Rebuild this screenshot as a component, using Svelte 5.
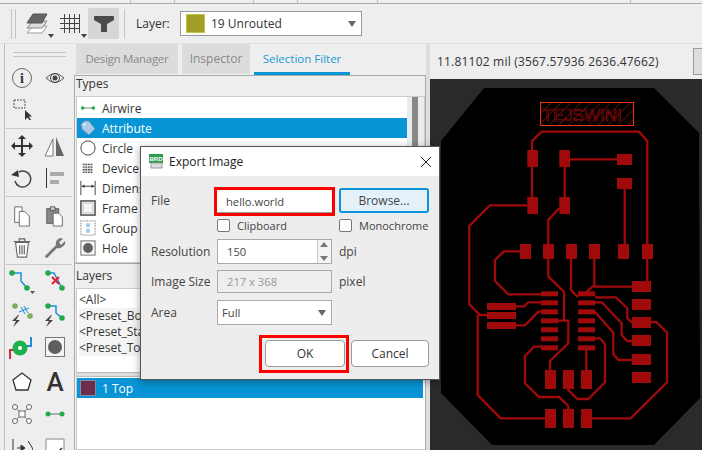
<script>
  const types = [
    { name: "Airwire", icon: "airwire" },
    { name: "Attribute", icon: "tag", selected: true },
    { name: "Circle", icon: "circle" },
    { name: "Device", icon: "device" },
    { name: "Dimension", icon: "dim" },
    { name: "Frame", icon: "frame" },
    { name: "Group", icon: "group" },
    { name: "Hole", icon: "hole" }
  ];
  const presets = ["<All>", "<Preset_Bottom>", "<Preset_Standard>", "<Preset_Top>"];
  const ticks = [130, 174, 253, 297, 377, 630];

  // pcb pads as x, y, w, h in page coordinates
  const pads = [
    [527.3, 150, 10.7, 17], [559.3, 150, 10.7, 17], [527.3, 197, 10.7, 17], [559.3, 197, 10.7, 17],
    [617, 154, 15, 11], [617, 178, 15, 11],
    [520, 244, 11, 15], [543, 244, 11, 15], [566, 244, 11, 15], [589, 244, 11, 15], [618, 244, 11, 15], [642, 244, 11, 15],
    [487, 303, 29, 7], [487, 312, 29, 7], [487, 322, 29, 7],
    [632, 281, 19, 11], [632, 299, 19, 11], [632, 317, 19, 11], [632, 335, 19, 11], [632, 354, 19, 11], [632, 372, 19, 11],
    [545, 370, 11, 19], [563, 370, 11, 19], [581, 370, 11, 19],
    [545, 409, 11, 19], [563, 409, 11, 19], [581, 409, 11, 19]
  ];
  const icPads = [291.3, 300.3, 309.3, 318.3, 327.3, 336.3, 345.3];
  const traces = [
    "532,150 532,141 541.7,131.7 639,131.7 647.3,141 647.3,282",
    "532,167 532,197",
    "564.7,167 564.7,197",
    "570,159.3 617,159.3",
    "624.7,189 624.7,244",
    "527,205.3 490,205.3 469.3,226 469.3,304.3 480,315 487,315",
    "559.3,208 548.3,220 548.3,276.7 564,291.7 564,320",
    "520,251.3 504,251.3 495,260 495,281 508.3,294.3 541,294.3",
    "571,259 571,290 578,297.3",
    "594.3,259 594.3,285 586.7,291.7",
    "593.3,286.7 632,286.7",
    "516,306.3 524.3,306.3 528.3,302.3 541,302.3",
    "516,325.3 525,325.3 538.3,311.7 541,311.7",
    "477.7,315 477.7,395 500.7,418.3 545,418.3",
    "558,320.7 568.3,320.7 568.3,343.3 550,361 550,370",
    "541,346.7 534,346.7 525,356 525,383.3 539,397 559,397 568.3,406 568.3,409",
    "586.3,350 586.3,370",
    "595,338.3 600,338.3 605,344.3 605,382.3 588.3,399 577.3,399 567.3,389",
    "592,418.3 630.7,418.3 667,382.3 667,332.7 656.3,322 651,322",
    "595,297.3 616,297.3 627.3,308.3 627.3,318.3 632,322.3",
    "595,302.3 601.7,302.3 621.7,323.3 621.7,335 627.3,341 632,341",
    "595,311.7 613.3,332.7 613.3,354.3 618.7,360 632,360"
  ];
</script>

<div class="app">
  <div class="topstrip">
    {#each ticks as t}<i style="left:{t}px"></i>{/each}
  </div>

  <div class="toolbar">
    <div class="grip"></div>
    <svg class="tb" width="28" height="26" viewBox="0 0 28 26">
      <path d="M0 22 6 15H20L15 22Z" fill="#fff" stroke="#999"/>
      <path d="M0 17 6 10H20L15 17Z" fill="#ddd" stroke="#888"/>
      <path d="M0 12 6 3H20L15 12Z" fill="#666" stroke="#555"/>
      <path d="M21 23h6l-3 4z" fill="#444"/>
    </svg>
    <svg class="tb gridicon" width="28" height="26" viewBox="0 0 28 26">
      <path d="M4.500 3V22M9.500 3V22M14.500 3V22M19.500 3V22M0 7.500H20M0 12.500H20M0 17.500H20" stroke="#444" fill="none"/>
      <path d="M21 23h6l-3 4z" fill="#444"/>
    </svg>
    <div class="filter">
      <svg width="20" height="16" viewBox="0 0 20 16"><path d="M0 1Q0 0 1 0H19Q20 0 20 1V4L13 8V15Q13 16 12 16H8Q7 16 7 15V8L0 4Z" fill="#4a4a4a"/></svg>
    </div>
    <div class="vsep"></div>
    <span class="layerlabel">Layer:</span>
    <div class="layerselect">
      <span class="swatch"></span>
      <span>19 Unrouted</span>
      <span class="arrow"></span>
    </div>
  </div>

  <div class="main">
    <div class="tools">
      <div class="toolgrip"></div>
      <div class="toolgrid">
        <svg viewBox="0 0 22 22"><circle cx="11" cy="11" r="9.500" fill="none" stroke="#666"/><text x="11" y="16" text-anchor="middle" font-family="Liberation Serif" font-weight="700" font-size="14" fill="#333">i</text></svg>
        <svg viewBox="0 0 22 22"><path d="M2 11Q11 2 20 11Q11 20 2 11Z" fill="none" stroke="#555"/><circle cx="11" cy="11" r="4.500" fill="none" stroke="#444"/><circle cx="11" cy="11" r="2.500" fill="#444"/></svg>
        <svg viewBox="0 0 22 22"><rect x="3" y="2" width="11" height="8" fill="none" stroke="#555" stroke-dasharray="2 1"/><path d="M14 12V22L16.500 19.500L19 23L20 22L18 18.500H21Z" fill="#333"/></svg>
        <span></span>
        <div class="tsep"></div>
        <svg viewBox="0 0 22 22"><path d="M11 1V21M1 11H21" stroke="#333" stroke-width="2"/><path d="M11 0 7 4H15ZM11 22 7 18H15ZM0 11 4 7V15ZM22 11 18 7V15Z" fill="#333"/></svg>
        <svg viewBox="0 0 22 22"><path d="M9 4V21H1Z" fill="#fff" stroke="#777"/><path d="M12 2V21H20Z" fill="#666"/></svg>
        <svg viewBox="0 0 22 22"><path d="M8 5A8 8 0 1 1 4 14" fill="none" stroke="#444" stroke-width="1.500"/><path d="M0 8 7 3 8 10Z" fill="#333"/></svg>
        <svg viewBox="0 0 22 22"><path d="M2.500 1V21" stroke="#333"/><path d="M6 5H20V9H6ZM6 13H15V17H6Z" fill="#aaa"/></svg>
        <div class="tsep"></div>
        <svg viewBox="0 0 22 24"><path d="M3 2H11V19H3Z" fill="#fff" stroke="#666"/><path d="M8 7H14L19 12V23H8Z" fill="#fff" stroke="#666"/></svg>
        <svg viewBox="0 0 22 24"><path d="M2 4H15V20H2Z" fill="#888" stroke="#555"/><path d="M6 2H11V6H6Z" fill="#ccc" stroke="#555"/><path d="M9 9H15L19 13V23H9Z" fill="#fff" stroke="#666"/></svg>
        <svg viewBox="0 0 22 24"><path d="M4 6 6 22H16L18 6Z" fill="#fff" stroke="#666" stroke-width="1.200"/><path d="M2 5H20M8 5V2H14V5M8.500 9V19M11 9V19M13.500 9V19" stroke="#666" fill="none" stroke-width="1.300"/></svg>
        <svg viewBox="0 0 22 22"><path d="M2 21 1 19 12 8Q11 3 16 1Q18 1 19 2L15 5 17 8 21 4Q22 8 18 10Q16 12 13 11L3 21Z" fill="#777"/></svg>
        <div class="tsep"></div>
        <svg class="wide" viewBox="0 0 26 26"><path d="M3 6H12V14L18 21" fill="none" stroke="#1a8fe0" stroke-width="1.500"/><circle cx="3" cy="6" r="2.800" fill="#22a94b"/><circle cx="18" cy="21" r="2.800" fill="#22a94b"/><path d="M21 24h5l-2.500 3z" fill="#555"/></svg>
        <svg class="wide" viewBox="0 0 26 26"><path d="M6 6H12L20 21" fill="none" stroke="#1a8fe0" stroke-width="1.500"/><circle cx="6" cy="6" r="2.800" fill="#22a94b"/><circle cx="20" cy="21" r="2.800" fill="#22a94b"/><path d="M10 10 17 17M17 10 10 17" stroke="#e2202c" stroke-width="2"/></svg>
        <svg class="wide" viewBox="0 0 26 26"><circle cx="6" cy="4" r="2.800" fill="#7dad5a"/><circle cx="21" cy="14" r="2.800" fill="#7dad5a"/><path d="M12 5 16 12M15 4 19 11M10 10 20 6" stroke="#1a8fe0"/><path d="M9 13 3 19H7L4 25 11 18H7L10 13Z" fill="#444"/></svg>
        <svg class="wide" viewBox="0 0 26 26"><path d="M6 4H14V11L20 16" fill="none" stroke="#1a8fe0" stroke-width="1.500"/><circle cx="6" cy="4" r="2.800" fill="#22a94b"/><circle cx="20" cy="16" r="2.800" fill="#22a94b"/><path d="M9 13 3 19H7L4 25 11 18H7L10 13Z" fill="#444"/></svg>
        <svg class="wide" viewBox="0 0 26 26"><path d="M1 25V16H5" fill="none" stroke="#c8303c" stroke-width="2"/><path d="M22 3V12H18" fill="none" stroke="#1a8fe0" stroke-width="2"/><circle cx="11" cy="14" r="7.500" fill="#1db14c"/><circle cx="11" cy="14" r="2" fill="#fff"/></svg>
        <svg viewBox="0 0 22 22"><rect x="1.500" y="1.500" width="19" height="19" fill="#f4f4f4" stroke="#777"/><circle cx="11" cy="11" r="7" fill="#5f5f5f"/></svg>
        <svg viewBox="0 0 22 22"><path d="M11 2 20 9 17 19H5L2 9Z" fill="#fff" stroke="#333" stroke-width="1.300"/></svg>
        <span class="bigA">A</span>
        <svg viewBox="0 0 22 22"><path d="M4 4 18 18M18 4 4 18" stroke="#888"/><rect x="8" y="8" width="6" height="6" fill="#fff" stroke="#666"/><g fill="#fff" stroke="#666"><circle cx="4" cy="4" r="2.500"/><circle cx="18" cy="4" r="2.500"/><circle cx="4" cy="18" r="2.500"/><circle cx="18" cy="18" r="2.500"/></g></svg>
        <svg viewBox="0 0 22 22"><path d="M4 11H18" stroke="#999" stroke-width="1.500"/><circle cx="4" cy="11" r="2.500" fill="#22a94b"/><circle cx="18" cy="11" r="2.500" fill="#22a94b"/></svg>
        <svg viewBox="0 0 22 22"><path d="M2 2V22M17 4 22 12 17 20" fill="none" stroke="#333"/><path d="M6 11H12M10 8 14 11 10 14Z" fill="#333" stroke="#333"/></svg>
        <svg viewBox="0 0 22 22"><path d="M2 2H20V22H2Z" fill="#fff" stroke="#888"/><path d="M9 20 18 11" stroke="#333" stroke-width="1.500"/></svg>
      </div>
    </div>

    <div class="panel">
      <div class="tabs">
        <div class="tab dm">Design Manager</div>
        <div class="tab insp">Inspector</div>
        <div class="tab active">Selection Filter</div>
      </div>
      <div class="group types">
        <div class="grouphead">Types</div>
        <div class="listbox">
          <div class="rows">
            {#each types as t}
              <div class="row" class:selected={t.selected}>
                <svg class="rowicon" viewBox="0 0 18 18">
                  {#if t.icon === "airwire"}
                    <path d="M3 9H15" stroke="#888" stroke-width="1.200"/><circle cx="3" cy="9" r="2" fill="#22a94b"/><circle cx="15" cy="9" r="2" fill="#22a94b"/>
                  {:else if t.icon === "tag"}
                    <path d="M1 5 5 1H10L17 10 10 17 2 10Z" fill="#a9cbe8" stroke="#5f88aa"/><circle cx="5" cy="5" r="1.200" fill="#fff"/>
                  {:else if t.icon === "circle"}
                    <circle cx="9" cy="9" r="8" fill="#fff" stroke="#333"/>
                  {:else if t.icon === "device"}
                    <path d="M4 4H14V14H4Z" fill="#ddd"/><path d="M3 5H15M3 8H15M3 11H15M3 14H15" stroke="#555" stroke-dasharray="2 1" stroke-width="1.500"/>
                  {:else if t.icon === "dim"}
                    <path d="M1 1V17M17 1V17M2 7H16" stroke="#333" fill="none"/><path d="M2 7 5 5V9ZM16 7 13 5V9Z" fill="#333"/>
                  {:else if t.icon === "frame"}
                    <rect x="1" y="1" width="16" height="16" fill="#ddd" stroke="#444" stroke-width="1.500"/><rect x="4.500" y="4.500" width="9" height="9" fill="#f2f2f2"/>
                  {:else if t.icon === "group"}
                    <rect x="1" y="1" width="16" height="16" fill="#fff" stroke="#aaa" stroke-dasharray="2 1" stroke-width="1.500"/><circle cx="9" cy="6" r="2.500" fill="#9fd0ee"/><circle cx="9" cy="12" r="2.500" fill="#9fd0ee"/>
                  {:else}
                    <rect x="1" y="1" width="16" height="16" fill="#f6f6f6" stroke="#666"/><circle cx="9" cy="9" r="5.500" fill="#5f5f5f"/>
                  {/if}
                </svg>
                <span>{t.name}</span>
              </div>
            {/each}
          </div>
          <div class="scroll"><b></b></div>
        </div>
      </div>
      <div class="group layers">
        <div class="grouphead tall">Layers</div>
        <div class="listbox layerbox">
          <div class="presets">
            {#each presets as p, i}
              <div class="preset" class:first={i === 0}>{p}</div>
            {/each}
          </div>
          <div class="splitter"></div>
          <div class="layerrow"><span class="topswatch"></span><span>1 Top</span></div>
        </div>
      </div>
    </div>

    <div class="canvaswrap">
      <div class="coords">
        <span>11.81102 mil (3567.57936 2636.47662)</span>
        <span class="coordbtn"></span>
      </div>
      <div class="canvas">
        <svg width="272" height="371" viewBox="430 79 272 371">
          <defs>
            <pattern id="hatch" width="7" height="7" patternUnits="userSpaceOnUse" patternTransform="rotate(45)">
              <path d="M0 0V7" stroke="#d42a10" stroke-width="0.700"/>
            </pattern>
          </defs>
          <path d="M484 88H654L699 133L700 398L654 445H492L441 393V141Z" fill="#000"/>
          <rect x="540.500" y="102.500" width="93" height="23" fill="url(#hatch)" stroke="#f03010"/>
          <text x="582" y="120.500" text-anchor="middle" class="boardtext">TEJSWINI</text>
          <g fill="none" stroke="#a00a0a" stroke-width="2.300">
            {#each traces as t}<polyline points={t}/>{/each}
          </g>
          <g fill="#a00a0a">
            {#each pads as p}<rect x={p[0]} y={p[1]} width={p[2]} height={p[3]}/>{/each}
            {#each icPads as y}
              <rect x="541" {y} width="17" height="5"/>
              <rect x="578" {y} width="17" height="5"/>
            {/each}
          </g>
        </svg>
      </div>
    </div>
  </div>

  <div class="dialog">
    <div class="titlebar">
      <svg width="15" height="15" viewBox="0 0 15 15"><rect width="14" height="9" fill="#2d9a4e"/><text x="7" y="7" text-anchor="middle" font-size="6" font-family="Liberation Sans" font-weight="700" fill="#fff">BRD</text><path d="M2 9H13V14H2Z" fill="#ddd" stroke="#999"/></svg>
      <span class="dtitle">Export Image</span>
      <svg class="close" width="10" height="10" viewBox="0 0 10 10"><path d="M0 0 10 10M10 0 0 10" stroke="#222"/></svg>
    </div>
    <div class="dbody">
      <label for="f">File</label>
      <div class="fileinput"><input id="f" value="hello.world" /></div>
      <button class="browse">Browse...</button>
      <span></span>
      <div class="check"><span class="box"></span>Clipboard</div>
      <div class="check"><span class="box"></span>Monochrome</div>
      <label for="r">Resolution</label>
      <div class="spin"><span id="r">150</span><div class="spinbtns"><i class="up"></i><i class="down"></i></div></div>
      <span class="unit">dpi</span>
      <label for="s">Image Size</label>
      <div class="field disabled"><span id="s">217 x 368</span></div>
      <span class="unit">pixel</span>
      <label for="a">Area</label>
      <div class="field combo"><span id="a">Full</span><span class="arrow"></span></div>
      <span></span>
    </div>
    <div class="dbuttons">
      <div class="okwrap"><button>OK</button></div>
      <button class="cancel">Cancel</button>
    </div>
  </div>
</div>

<style>
  :global(body) {
    margin: 0;
  }
  .app {
    position: relative;
    width: 702px;
    height: 450px;
    overflow: hidden;
    background: #eeeeee;
    font-family: "Open Sans", "Liberation Sans", sans-serif;
    font-size: 12px;
    color: #333;
    display: flex;
    flex-direction: column;
  }
  .topstrip {
    position: relative;
    height: 3px;
    border-bottom: 1px solid #aaa;
    flex: none;
  }
  .topstrip i {
    position: absolute;
    top: 0;
    width: 1px;
    height: 3px;
    background: #bbb;
  }
  .toolbar {
    height: 40px;
    flex: none;
    display: flex;
    align-items: center;
    border-bottom: 1px solid #ddd;
    box-sizing: border-box;
  }
  .grip {
    width: 3px;
    height: 30px;
    margin-left: 11px;
    border-left: 1px solid #c4c4c4;
    border-right: 1px solid #c4c4c4;
  }
  .tb {
    margin-left: 11px;
    flex: none;
    overflow: visible;
  }
  .gridicon {
    margin-left: 5px;
  }
  .filter {
    width: 31px;
    height: 31px;
    flex: none;
    background: #d6d6d6;
    border-radius: 2px;
    display: flex;
    align-items: center;
    justify-content: center;
  }
  .vsep {
    width: 1px;
    height: 30px;
    background: #c4c4c4;
    margin: 0 11px 0 5px;
  }
  .layerlabel {
    font-size: 12px;
    width: 33px;
    margin-right: 11px;
  }
  .layerselect {
    width: 182px;
    height: 25px;
    box-sizing: border-box;
    background: #fff;
    border: 1px solid #999;
    display: flex;
    align-items: center;
    gap: 6px;
    padding-left: 5px;
    position: relative;
    font-size: 12px;
  }
  .swatch {
    width: 19px;
    height: 19px;
    background: #a0a028;
    border: 1px solid #c4c44a;
    box-sizing: border-box;
  }
  .arrow {
    position: absolute;
    right: 5px;
    top: 9px;
    border: 4px solid transparent;
    border-top: 6px solid #666;
    border-bottom: 0;
    width: 0;
    height: 0;
  }
  .main {
    flex: 1;
    display: flex;
    min-height: 0;
  }
  .tools {
    width: 70px;
    flex: none;
    margin-left: 4px;
    border-left: 1px solid #bbb;
    box-sizing: border-box;
    padding: 8px 0 0 6px;
  }
  .toolgrip {
    height: 3px;
    margin: 0 8px 9px 2px;
    border-top: 1px solid #c4c4c4;
    border-bottom: 1px solid #c4c4c4;
  }
  .toolgrid {
    display: grid;
    grid-template-columns: 22px 22px;
    column-gap: 11px;
    grid-template-rows: 24px 38px 1px 34px 30px 6px 33px 32px 1px 30px 40px 24px 46px 18px 50px;
    justify-items: center;
    align-items: center;
  }
  .toolgrid svg {
    width: 22px;
    height: 22px;
    display: block;
  }
  .toolgrid svg.wide {
    width: 26px;
    height: 26px;
    overflow: visible;
  }
  .tsep {
    grid-column: 1 / 3;
    width: 66px;
    height: 1px;
    background: #c8c8c8;
  }
  .bigA {
    font-family: Roboto, "Liberation Sans", sans-serif;
    font-size: 26px;
    font-weight: 500;
    line-height: 22px;
    color: #333;
  }
  .panel {
    width: 352px;
    flex: none;
    display: flex;
    flex-direction: column;
  }
  .tabs {
    display: flex;
    gap: 4px;
    height: 31px;
    flex: none;
    padding-left: 2px;
  }
  .tab {
    background: #dcdcdc;
    color: #888;
    line-height: 30px;
    height: 30px;
    font-size: 11.500px;
    text-align: center;
    box-sizing: border-box;
  }
  .tab.dm {
    width: 102px;
    letter-spacing: -0.300px;
  }
  .tab.insp {
    width: 68px;
    font-size: 12px;
  }
  .tab.active {
    width: 96px;
    background: none;
    color: #1b9ad6;
    position: relative;
  }
  .tab.active::after {
    content: "";
    position: absolute;
    left: 0;
    right: 0;
    bottom: -1px;
    height: 3px;
    background: #0895d6;
  }
  .group {
    border: 1px solid #aaa;
    border-bottom: 0;
    display: flex;
    flex-direction: column;
    background: #eee;
  }
  .types {
    height: 187px;
    flex: none;
  }
  .layers {
    flex: 1;
    min-height: 0;
  }
  .grouphead {
    height: 20px;
    line-height: 16px;
    font-size: 12px;
    padding-left: 1px;
    flex: none;
  }
  .grouphead.tall {
    height: 24px;
    line-height: 24px;
  }
  .listbox {
    flex: 1;
    min-height: 0;
    margin-left: 1px;
    background: #fff;
    border: 1px solid #ccc;
    display: flex;
    overflow: hidden;
  }
  .rows {
    flex: 1;
    padding: 1px 0 0 0;
  }
  .row {
    height: 20px;
    display: flex;
    align-items: center;
    gap: 6px;
    padding-left: 3px;
    font-size: 12px;
  }
  .row.selected {
    background: #0895d6;
    color: #fff;
  }
  .rowicon {
    width: 16px;
    height: 16px;
    flex: none;
  }
  .scroll {
    width: 17px;
    flex: none;
    padding: 0 6px 0 5px;
    box-sizing: border-box;
    background: #ececec;
  }
  .scroll b {
    display: block;
    height: 70px;
    background: #888;
  }
  .layerbox {
    flex-direction: column;
    border-right: 0;
  }
  .presets {
    padding: 3px 0 0 2px;
    height: 83px;
    flex: none;
    box-sizing: border-box;
  }
  .preset {
    height: 16px;
    line-height: 16px;
    font-size: 12px;
    background: #f4f4f4;
  }
  .preset.first {
    background: none;
  }
  .splitter {
    height: 3px;
    background: #ddd;
    border-top: 1px solid #bbb;
    border-bottom: 1px solid #bbb;
    flex: none;
  }
  .layerrow {
    margin: 1px 2px 0 0;
    height: 20px;
    flex: none;
    background: #0895d6;
    color: #fff;
    display: flex;
    align-items: center;
    gap: 6px;
    padding-left: 3px;
    font-size: 12px;
  }
  .topswatch {
    width: 16px;
    height: 16px;
    background: #6a2d4a;
    border: 1px solid #88a;
    box-sizing: border-box;
  }
  .canvaswrap {
    flex: 1;
    display: flex;
    flex-direction: column;
    min-width: 0;
    border-left: 4px solid #dddddd;
  }
  .coords {
    height: 35px;
    flex: none;
    display: flex;
    align-items: center;
    justify-content: space-between;
    padding-left: 7px;
    font-size: 12px;
    letter-spacing: 0.200px;
    box-sizing: border-box;
  }
  .coordbtn {
    width: 20px;
    height: 25px;
    background: #ddd;
    border: 1px solid #999;
    margin-right: -13px;
    flex: none;
  }
  .canvas {
    flex: 1;
    background: #2a2a2a;
    overflow: hidden;
  }
  .canvas svg {
    display: block;
  }
  .boardtext {
    font-family: "Liberation Sans", sans-serif;
    font-size: 17px;
    fill: none;
    stroke: #a00a0a;
    stroke-width: 0.600;
  }
  .dialog {
    position: absolute;
    left: 140px;
    top: 146px;
    width: 300px;
    height: 234px;
    box-sizing: border-box;
    background: #ededed;
    border: 1px solid #555;
    box-shadow: 0 2px 8px rgba(0, 0, 0, 0.350);
    display: flex;
    flex-direction: column;
    font-size: 12px;
    color: #444;
  }
  .titlebar {
    height: 29px;
    flex: none;
    background: #fff;
    display: flex;
    align-items: center;
    padding-left: 8px;
    gap: 5px;
  }
  .dtitle {
    color: #222;
  }
  .close {
    margin-left: auto;
    margin-right: 8px;
  }
  .dbody {
    display: grid;
    grid-template-columns: 59px 115px 91px;
    column-gap: 7px;
    grid-template-rows: 25px 25px 26px 34px 28px;
    padding: 12px 0 0 10px;
    align-items: center;
    flex: none;
  }
  .dbody label {
    white-space: nowrap;
  }
  .fileinput {
    outline: 3px solid #f00;
    height: 23px;
    background: #fff;
    box-sizing: border-box;
    border-bottom: 1px solid #999;
    align-self: end;
    font-size: 11.200px;
  }
  .fileinput input {
    width: 100%;
    height: 100%;
    box-sizing: border-box;
    border: 0;
    padding: 0 0 0 9px;
    font: inherit;
    color: #444;
    background: none;
    outline: none;
  }
  .browse {
    height: 25px;
    width: 90px;
    background: #e4f1fa;
    border: 2px solid #0a96d8;
    border-radius: 3px;
    font: inherit;
    color: #444;
    padding: 0;
  }
  .check {
    display: flex;
    align-items: center;
    gap: 7px;
    white-space: nowrap;
    font-size: 11px;
  }
  .box {
    width: 13px;
    height: 13px;
    background: #fff;
    border: 1px solid #777;
    border-radius: 2px;
    box-sizing: border-box;
    flex: none;
  }
  .spin,
  .field {
    height: 25px;
    box-sizing: border-box;
    background: #fff;
    border: 1px solid #aaa;
    display: flex;
    align-items: center;
    padding-left: 9px;
    position: relative;
    font-size: 11.200px;
  }
  .spinbtns {
    position: absolute;
    right: 0;
    top: 0;
    bottom: 0;
    width: 13px;
    border-left: 1px solid #ccc;
    background: #f4f4f4;
  }
  .spinbtns i {
    position: absolute;
    left: 2px;
    border: 4px solid transparent;
  }
  .spinbtns .up {
    top: 2px;
    border-bottom: 5px solid #777;
    border-top: 0;
  }
  .spinbtns .down {
    bottom: 2px;
    border-top: 5px solid #777;
    border-bottom: 0;
  }
  .field.disabled {
    height: 23px;
    background: #eeeeee;
    color: #999;
  }
  .field.combo {
    padding-left: 4px;
  }
  .dbuttons {
    display: flex;
    justify-content: flex-end;
    gap: 2px;
    padding: 9px 10px 0 0;
    align-items: flex-start;
  }
  .dbuttons button {
    height: 27px;
    width: 78px;
    background: #fff;
    border: 1px solid #999;
    border-radius: 4px;
    font: inherit;
    color: #333;
    padding: 0;
  }
  .okwrap {
    display: flex;
    padding: 2px 1px 3px 3px;
    border: 3px solid #f00;
  }
  .dbuttons .okwrap button {
    width: 80px;
  }
  .dbuttons .cancel {
    margin-top: 5px;
  }
</style>
